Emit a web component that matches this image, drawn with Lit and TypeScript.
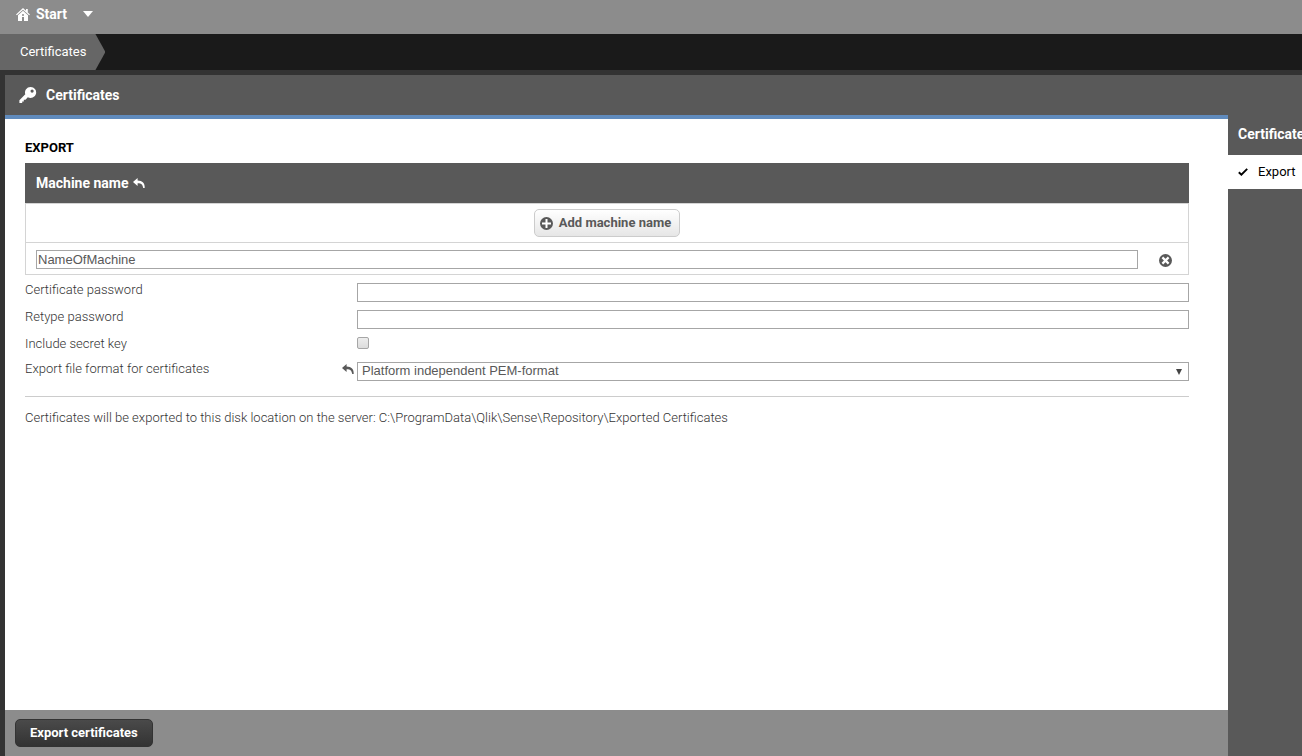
import { LitElement, html, svg, css } from "lit";
import { customElement, state } from "lit/decorators.js";

const homeIcon = html`<svg class="icon" width="14" height="13" viewBox="0 0 14 13" aria-hidden="true">
  <path fill="currentColor" d="M7 0 0 6.400l.9.9L7 1.800l6.100 5.500.9-.9-2.200-2V1H10v1.700z" />
  <path fill="currentColor" fill-rule="evenodd" d="M7 2.800 2 7.300V13h4V9h2v4h4V7.300zM6 6.200h2v1.600H6z" />
</svg>`;

const keyIcon = html`<svg class="icon" width="18" height="18" viewBox="0 0 18 18" aria-hidden="true">
  <path
    fill="currentColor"
    fill-rule="evenodd"
    d="M11.500 1a5.500 5.500 0 0 0-5.200 7.300L.4 14.200V17h2.800v-1.600h1.600v-1.700h1.700l2.300-2.500A5.500 5.500 0 1 0 11.500 1zm1.600 2.500a1.600 1.600 0 1 1 0 3.200 1.600 1.600 0 0 1 0-3.200z"
  />
</svg>`;

const undoPath = svg`<path fill="currentColor" d="M4.600 0 0 4l4.600 4V5.300c3.200-.1 5 .8 5.600 4.700h1.500C12 5.300 9.500 2.700 4.600 2.600z" />`;
const undoIcon = html`<svg class="icon" width="12" height="10" viewBox="0 0 12 10" aria-hidden="true">${undoPath}</svg>`;

const plusIcon = html`<svg class="icon" width="13" height="13" viewBox="0 0 13 13" aria-hidden="true">
  <circle cx="6.500" cy="6.500" r="6.500" fill="currentColor" />
  <path d="M6.500 2v9M2 6.500h9" stroke="#fff" stroke-width="2" />
</svg>`;

const removeIcon = html`<svg class="icon" width="13" height="13" viewBox="0 0 13 13" aria-hidden="true">
  <circle cx="6.500" cy="6.500" r="6.500" fill="currentColor" />
  <path d="M3.400 3.400l6.200 6.200M9.600 3.400l-6.200 6.200" stroke="#fff" stroke-width="2.200" />
</svg>`;

const checkIcon = html`<svg class="icon" width="10" height="8" viewBox="0 0 10 8" aria-hidden="true">
  <path d="M.8 4.200l2.600 2.500L9.200.9" fill="none" stroke="currentColor" stroke-width="1.900" />
</svg>`;

@customElement("app-root")
export class AppRoot extends LitElement {
  @state() private machines: string[] = ["NameOfMachine"];

  static styles = css`
    :host {
      display: flex;
      flex-direction: column;
      min-height: 100vh;
      background: #333;
      color: #595959;
      font: 13px/20px Roboto, "Liberation Sans", sans-serif;
      overflow-x: hidden;
    }
    *,
    *::before {
      box-sizing: border-box;
    }
    button,
    input,
    select {
      margin: 0;
      font: inherit;
      color: inherit;
    }
    button {
      cursor: pointer;
    }
    .icon {
      display: block;
      flex: none;
    }
    .topbar {
      display: flex;
      align-items: flex-start;
      height: 34px;
      padding: 4px 16px;
      background: #8c8c8c;
    }
    .start {
      display: flex;
      align-items: center;
      gap: 6px;
      color: #fff;
      font-size: 14px;
      font-weight: 700;
      text-decoration: none;
    }
    .menu {
      display: flex;
      align-items: center;
      height: 20px;
      margin-left: 16px;
      padding: 0;
      border: 0;
      background: none;
      color: #fff;
    }
    .crumbs {
      display: flex;
      height: 36px;
      margin-bottom: 5px;
      background: #1a1a1a;
    }
    .crumb {
      padding: 0 19px 0 20px;
      line-height: 36px;
      background: #666;
      color: #fff;
      text-decoration: none;
      clip-path: polygon(0 0, calc(100% - 10px) 0, 100% 50%, calc(100% - 10px) 100%, 0 100%);
    }
    .panel {
      display: flex;
      flex-direction: column;
      flex: 1;
      margin-left: 5px;
      background: #595959;
    }
    .panel-head {
      display: flex;
      align-items: center;
      gap: 9px;
      height: 40px;
      padding: 0 14px;
      color: #fff;
    }
    h1,
    h2 {
      margin: 0;
      font-size: 14px;
      font-weight: 700;
    }
    .body {
      display: flex;
      flex: 1;
    }
    .main {
      display: flex;
      flex-direction: column;
      flex: 1;
      min-width: 0;
      border-top: 4px solid #608bbd;
      background: #fff;
    }
    .content {
      flex: 1;
      padding: 19px 39px 19px 20px;
    }
    .section {
      margin-bottom: 5px;
      color: #000;
      font-size: 13px;
      text-transform: uppercase;
    }
    .machines {
      width: 100%;
      border-spacing: 0;
    }
    .machines th {
      height: 40px;
      padding: 0 11px;
      background: #595959;
      color: #fff;
      font-size: 14px;
      text-align: left;
    }
    .th-label {
      display: flex;
      align-items: center;
      gap: 4px;
    }
    .machines td {
      padding: 0;
      border: 0 solid #d4d4d4;
      border-top-width: 1px;
    }
    .machines td:first-child {
      border-left-width: 1px;
    }
    .machines td:last-child {
      border-right-width: 1px;
    }
    .machines tr:last-child td {
      border-bottom-width: 1px;
    }
    .machines .add-cell {
      padding: 5px;
    }
    .add {
      display: flex;
      align-items: center;
      gap: 6px;
      height: 28px;
      margin: 0 auto;
      padding: 0 8px 0 5px;
      border: 1px solid #ccc;
      border-radius: 5px;
      background: linear-gradient(#fff, #e6e6e6);
      font-weight: 700;
    }
    .machines .name-cell {
      padding: 7px 0 5px 10px;
    }
    .machines .remove-cell {
      width: 51px;
    }
    .remove {
      display: block;
      margin: 3px auto 0 21px;
      padding: 0;
      border: 0;
      background: none;
    }
    .field {
      display: block;
      width: 100%;
      height: 19px;
      padding: 0 1px;
      border: 1px solid #a6a6a6;
      border-radius: 0;
      background: #fff;
      font-family: "Liberation Sans", Arial, sans-serif;
    }
    .form {
      display: grid;
      grid-template-columns: 320px 12px 1fr;
      margin-top: 4px;
      padding-bottom: 11px;
      border-bottom: 1px solid #ccc;
    }
    .form label {
      grid-column: 1;
      color: #333;
      font-weight: 300;
      line-height: 22px;
    }
    .undo {
      grid-column: 2;
      margin: 6px 0 0 -3px;
      padding: 0;
      border: 0;
      background: none;
      height: 10px;
    }
    .control {
      grid-column: 3;
      padding: 4px 0;
    }
    .tick {
      display: block;
      appearance: none;
      width: 12px;
      height: 12px;
      margin-bottom: 5px;
      border: 1px solid #a6a6a6;
      border-radius: 2px;
      background: linear-gradient(#ededed, #dcdcdc);
    }
    .tick:checked {
      background: #595959;
    }
    .select-wrap {
      display: grid;
      align-items: center;
    }
    .select-wrap > * {
      grid-area: 1 / 1;
    }
    .select {
      appearance: none;
      padding: 0 20px 1px 4px;
      line-height: 16px;
    }
    .caret {
      justify-self: end;
      margin-right: 7px;
      pointer-events: none;
    }
    .note {
      margin: 11px 0 0;
      color: #333;
      font-weight: 300;
    }
    .footer {
      display: flex;
      align-items: flex-start;
      height: 46px;
      padding: 9px 10px;
      background: #8c8c8c;
    }
    .export {
      height: 28px;
      padding: 0 14px;
      border: 1px solid #333;
      border-radius: 5px;
      background: linear-gradient(#4a4a4a, #333);
      color: #fff;
      font-weight: 700;
      white-space: nowrap;
    }
    .side {
      flex: none;
      width: 74px;
      padding-top: 4px;
      overflow: hidden;
      color: #fff;
      white-space: nowrap;
    }
    .side h2 {
      padding: 5px 10px 11px;
    }
    .side-item {
      display: flex;
      align-items: center;
      gap: 10px;
      height: 34px;
      padding: 0 10px;
      background: #fff;
      color: #000;
      text-decoration: none;
    }
  `;

  private addMachine() {
    this.machines = [...this.machines, ""];
  }

  private removeMachine(index: number) {
    this.machines = this.machines.filter((_, i) => i !== index);
  }

  private renderMachine(name: string, index: number) {
    return html`<tr>
      <td class="name-cell">
        <input class="field" type="text" aria-label="Machine name" .value=${name} />
      </td>
      <td class="remove-cell">
        <button class="remove" type="button" aria-label="Remove" @click=${() => this.removeMachine(index)}>
          ${removeIcon}
        </button>
      </td>
    </tr>`;
  }

  render() {
    return html`
      <header class="topbar">
        <a class="start" href="#start">${homeIcon}Start</a>
        <button class="menu" type="button" aria-label="Open menu">
          <svg class="icon" width="10" height="6" viewBox="0 0 10 6" aria-hidden="true">
            <path fill="currentColor" d="M0 0h10L5 6z" />
          </svg>
        </button>
      </header>
      <nav class="crumbs" aria-label="Breadcrumb"><a class="crumb" href="#certificates">Certificates</a></nav>
      <div class="panel">
        <div class="panel-head">
          ${keyIcon}
          <h1>Certificates</h1>
        </div>
        <div class="body">
          <main class="main">
            <div class="content">
              <h2 class="section">Export</h2>
              <table class="machines">
                <thead>
                  <tr>
                    <th colspan="2"><span class="th-label">Machine name ${undoIcon}</span></th>
                  </tr>
                </thead>
                <tbody>
                  <tr>
                    <td class="add-cell" colspan="2">
                      <button class="add" type="button" @click=${this.addMachine}>${plusIcon}Add machine name</button>
                    </td>
                  </tr>
                  ${this.machines.map((name, i) => this.renderMachine(name, i))}
                </tbody>
              </table>
              <div class="form">
                <label for="password">Certificate password</label>
                <div class="control"><input class="field" id="password" type="password" /></div>
                <label for="retype">Retype password</label>
                <div class="control"><input class="field" id="retype" type="password" /></div>
                <label for="secret">Include secret key</label>
                <div class="control"><input class="tick" id="secret" type="checkbox" /></div>
                <label for="format">Export file format for certificates</label>
                <button class="undo" type="button" aria-label="Undo">${undoIcon}</button>
                <div class="control select-wrap">
                  <select class="field select" id="format">
                    <option>Platform independent PEM-format</option>
                    <option>Windows format</option>
                  </select>
                  <svg class="icon caret" width="6" height="6" viewBox="0 0 6 6" aria-hidden="true">
                    <path fill="#444" d="M0 0h6L3 6z" />
                  </svg>
                </div>
              </div>
              <p class="note">
                Certificates will be exported to this disk location on the server:
                C:\\ProgramData\\Qlik\\Sense\\Repository\\Exported Certificates
              </p>
            </div>
            <footer class="footer">
              <button class="export" type="button">Export certificates</button>
            </footer>
          </main>
          <aside class="side">
            <h2>Certificates</h2>
            <a class="side-item" href="#export">${checkIcon}Export</a>
          </aside>
        </div>
      </div>
    `;
  }
}
